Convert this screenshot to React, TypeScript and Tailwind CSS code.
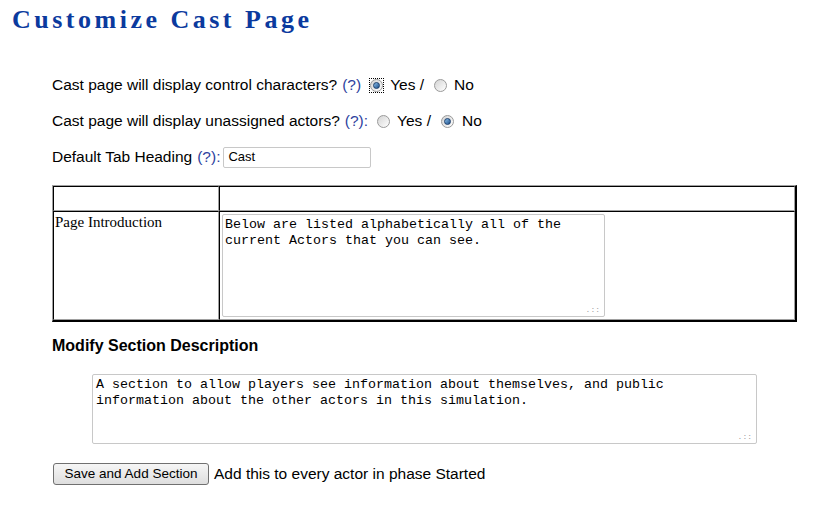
import React from "react";

function Radio({ checked, focused }: { checked?: boolean; focused?: boolean }) {
  const dot = (
    <span className="inline-flex items-center justify-center w-[13px] h-[13px] rounded-full border border-[#9a9a9a] bg-gradient-to-br from-[#d4d4d4] to-white">
      {checked && (
        <span className="w-[7px] h-[7px] rounded-full bg-gradient-to-br from-[#8cc0ea] to-[#1b4f8a] border border-[#1a3d6b]" />
      )}
    </span>
  );
  if (!focused) return dot;
  return <span className="flex outline outline-1 outline-dotted outline-black">{dot}</span>;
}

function Help({ colon }: { colon?: boolean }) {
  return (
    <span className="text-[#2d3f9e] ml-[5px]">
      (?){colon ? ":" : ""}
    </span>
  );
}

export default function App() {
  return (
    <div
      className="w-[814px] h-[508px] bg-white text-black"
      style={{ fontFamily: '"Liberation Sans", Arial, sans-serif' }}
    >
      <h1
        className="h-[40px] pl-[12px] pt-[4px] text-[26px] leading-[32px] font-bold tracking-[3.5px] text-[#0b3a9e]"
        style={{ fontFamily: '"Liberation Serif", "Times New Roman", serif' }}
      >
        Customize Cast Page
      </h1>

      <div className="pl-[52px] pt-[27px] text-[15.5px]">
        <div className="h-9 flex items-center">
          <span>Cast page will display control characters?</span>
          <Help />
          <span className="ml-[9px] flex">
            <Radio checked focused />
          </span>
          <span className="ml-[7px]">Yes /</span>
          <span className="ml-[10px] flex">
            <Radio />
          </span>
          <span className="ml-[7px]">No</span>
        </div>

        <div className="h-9 flex items-center">
          <span>Cast page will display unassigned actors?</span>
          <Help colon />
          <span className="ml-[9px] flex">
            <Radio />
          </span>
          <span className="ml-[7px]">Yes /</span>
          <span className="ml-[10px] flex">
            <Radio checked />
          </span>
          <span className="ml-[8px]">No</span>
        </div>

        <div className="h-9 flex items-center">
          <span>Default Tab Heading</span>
          <Help colon />
          <div className="ml-[3px] w-[148px] h-[21px] border border-[#c8c8c8] rounded-[2px] flex items-center px-[4px] text-[13px]">
            Cast
          </div>
        </div>

        <table className="mt-[10px] w-[745px] border-separate border-spacing-0 border border-t-[#a0a0a0] border-l-[#a0a0a0] border-r-black border-b-black border-r-2 border-b-2">
          <tbody>
            <tr>
              <td className="h-[25px] w-[166px] border border-t-black border-l-black border-r-[#a0a0a0] border-b-[#a0a0a0]" />
              <td className="h-[25px] border border-t-black border-l-black border-r-[#a0a0a0] border-b-[#a0a0a0]" />
            </tr>
            <tr>
              <td
                className="align-top border border-t-black border-l-black border-r-[#a0a0a0] border-b-[#a0a0a0] px-[1px] pt-[1px] text-[15px] leading-[18px]"
                style={{ fontFamily: '"Liberation Serif", "Times New Roman", serif' }}
              >
                Page Introduction
              </td>
              <td className="align-top border border-t-black border-l-black border-r-[#a0a0a0] border-b-[#a0a0a0] p-[2px]">
                <div
                  className="relative w-[383px] h-[103px] border border-[#c8c8c8] rounded-[2px] px-[2px] pt-[2px] text-[13.33px] leading-[16px] whitespace-pre"
                  style={{ fontFamily: '"Liberation Mono", "Courier New", monospace' }}
                >
                  {"Below are listed alphabetically all of the\ncurrent Actors that you can see."}
                  <span className="absolute right-[4px] bottom-[2px] text-[8px] leading-[8px] text-[#a0a0a0]">.::</span>
                </div>
              </td>
            </tr>
          </tbody>
        </table>

        <div className="mt-[14px] font-bold text-[16px] leading-[20px]">Modify Section Description</div>

        <div
          className="relative ml-[40px] mt-[18px] w-[665px] h-[70px] border border-[#c8c8c8] rounded-[2px] px-[3px] pt-[2px] text-[13.33px] leading-[16px] whitespace-pre"
          style={{ fontFamily: '"Liberation Mono", "Courier New", monospace' }}
        >
          {"A section to allow players see information about themselves, and public\ninformation about the other actors in this simulation."}
          <span className="absolute right-[4px] bottom-[2px] text-[8px] leading-[8px] text-[#a0a0a0]">.::</span>
        </div>

        <div className="mt-[19px] h-[22px] flex items-center">
          <button className="ml-[1px] w-[156px] h-[22px] border border-[#707070] rounded-[3px] bg-gradient-to-b from-[#f6f6f6] to-[#dedede] text-[13.5px] leading-[18px]">
            Save and Add Section
          </button>
          <span className="ml-[5px] text-[15.5px]">Add this to every actor in phase Started</span>
        </div>
      </div>
    </div>
  );
}
